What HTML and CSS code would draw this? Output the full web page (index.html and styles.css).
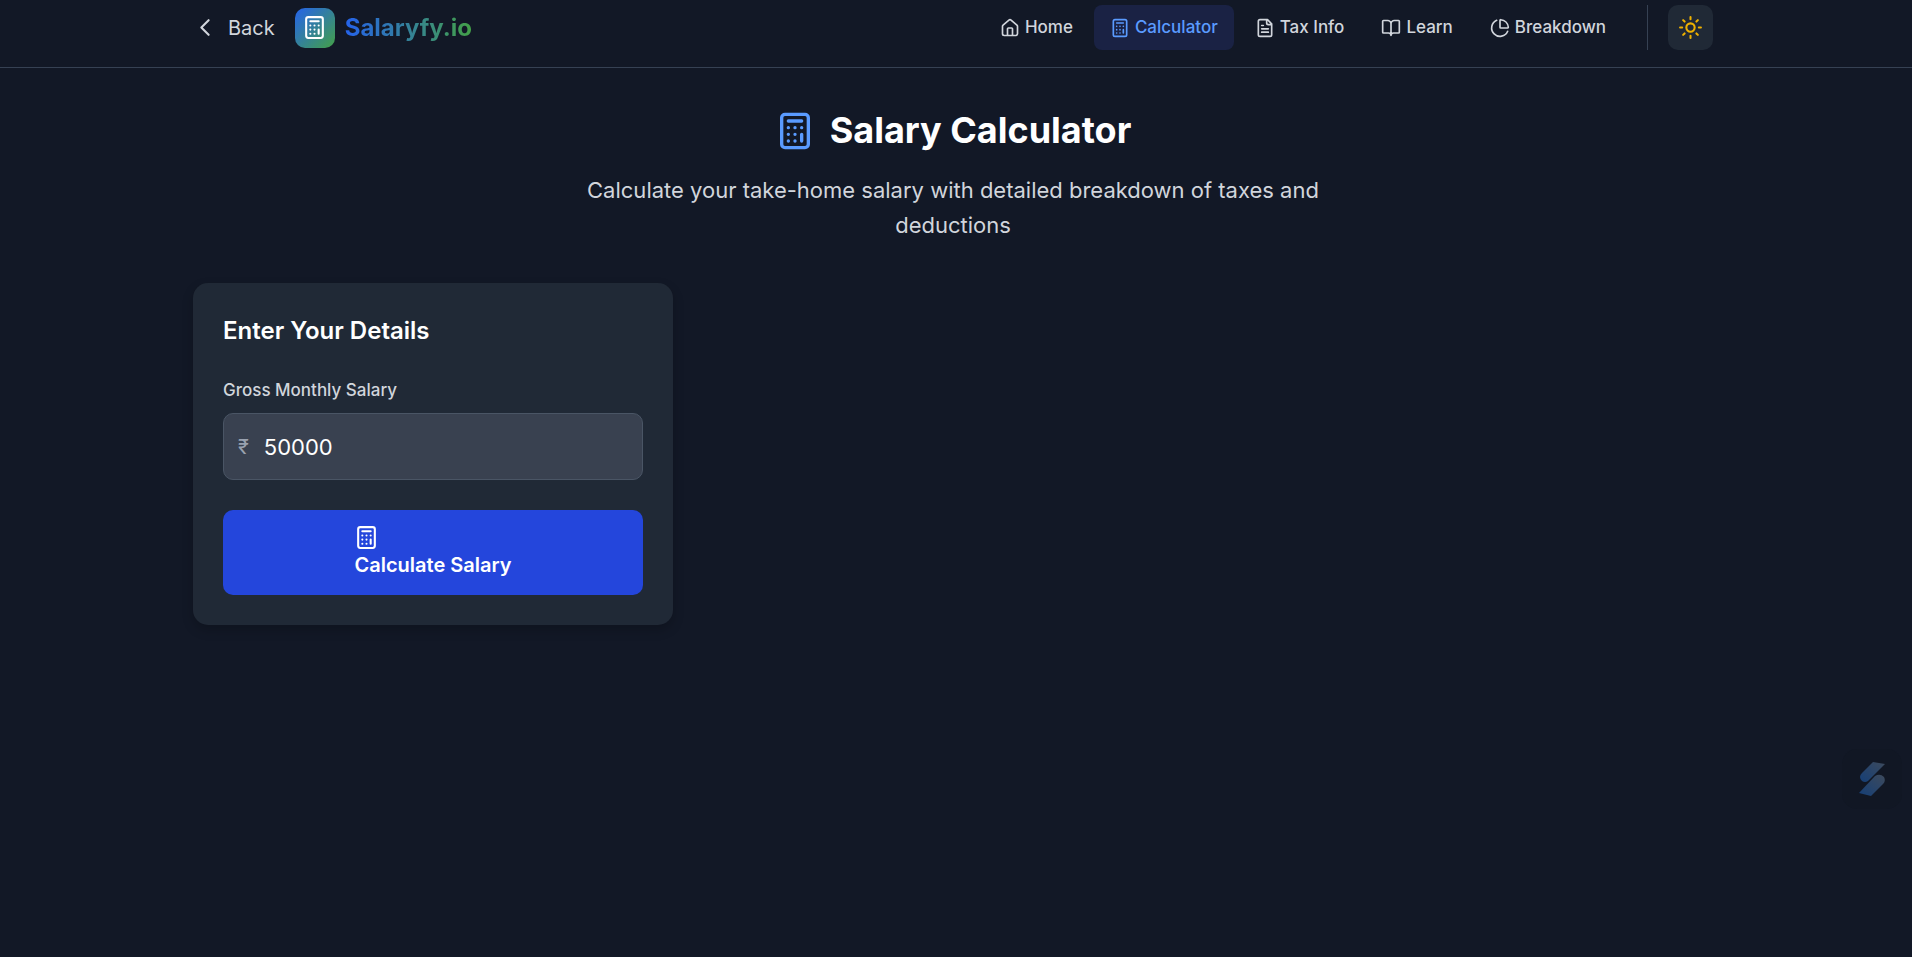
FILE: index.html
```
<!DOCTYPE html>
<html lang="en">
<head>
<meta charset="utf-8">
<title>Salary Calculator - Salaryfy.io</title>
<link rel="stylesheet" href="styles.css">
</head>
<body>
<svg class="sprite" aria-hidden="true">
  <symbol id="calc-box" viewBox="0 0 24 24"><rect x="4" y="2" width="16" height="20" rx="2"/><path d="M8 6h8M16 14v4M16 10h.01M12 10h.01M8 10h.01M12 14h.01M8 14h.01M12 18h.01M8 18h.01"/></symbol>
</svg>
<header class="header">
  <div class="container">
    <div class="bar">
      <div class="brand-group">
        <a class="back" href="#"><svg class="icon-md" viewBox="0 0 24 24"><path d="M15 19l-7-7 7-7"/></svg>Back</a>
        <a class="brand" href="#"><span class="brand-mark"><svg class="icon-md"><use href="#calc-box"/></svg></span><span class="brand-name">Salaryfy.io</span></a>
      </div>
      <nav class="nav">
        <a class="nav-link" href="#"><svg class="icon-sm" viewBox="0 0 24 24"><path d="M3 10a2 2 0 01.7-1.500l7-6a2 2 0 012.600 0l7 6A2 2 0 0121 10v9a2 2 0 01-2 2H5a2 2 0 01-2-2zM9 21v-8a1 1 0 011-1h4a1 1 0 011 1v8"/></svg>Home</a>
        <a class="nav-link active" href="#" aria-current="page"><svg class="icon-sm"><use href="#calc-box"/></svg>Calculator</a>
        <a class="nav-link" href="#"><svg class="icon-sm" viewBox="0 0 24 24"><path d="M15 2H6a2 2 0 00-2 2v16a2 2 0 002 2h12a2 2 0 002-2V7zM14 2v4a2 2 0 002 2h4M10 9H8M16 13H8M16 17H8"/></svg>Tax Info</a>
        <a class="nav-link" href="#"><svg class="icon-sm" viewBox="0 0 24 24"><path d="M12 7v14M3 18a1 1 0 01-1-1V4a1 1 0 011-1h5a4 4 0 014 4 4 4 0 014-4h5a1 1 0 011 1v13a1 1 0 01-1 1h-6a3 3 0 00-3 3 3 3 0 00-3-3z"/></svg>Learn</a>
        <a class="nav-link" href="#"><svg class="icon-sm" viewBox="0 0 24 24"><path d="M21 12c.552 0 1.005-.449.950-.998a10 10 0 00-8.953-8.951c-.550-.055-.998.398-.998.950v8a1 1 0 001 1zM21.210 15.890A10 10 0 118 2.830"/></svg>Breakdown</a>
        <div class="tools"><button class="theme" type="button" aria-label="Switch to light theme"><svg class="icon-md" viewBox="0 0 24 24"><circle cx="12" cy="12" r="4"/><path d="M12 2v2M12 20v2M4.930 4.930l1.410 1.410M17.660 17.660l1.410 1.410M2 12h2M20 12h2M6.340 17.660l-1.410 1.410M19.070 4.930l-1.410 1.410"/></svg></button></div>
      </nav>
    </div>
  </div>
</header>
<main class="container main">
  <div class="intro">
    <h1 class="title"><svg class="icon-xl"><use href="#calc-box"/></svg>Salary Calculator</h1>
    <p class="lead">Calculate your take-home salary with detailed breakdown of taxes and deductions</p>
  </div>
  <div class="grid">
    <form class="card">
      <h2 class="card-title">Enter Your Details</h2>
      <label class="label" for="salary">Gross Monthly Salary</label>
      <div class="field"><span class="currency">₹</span><input class="input" id="salary" type="text" inputmode="numeric" value="50000"></div>
      <button class="submit" type="button"><span class="submit-text"><svg class="icon-md"><use href="#calc-box"/></svg>Calculate Salary</span></button>
    </form>
  </div>
</main>
<button class="assistant" type="button" aria-label="Open assistant">
  <svg class="assistant-mark" viewBox="0 0 28 36"><defs><linearGradient id="ribbon" x1="1" y1="0" x2="0" y2="1"><stop offset="0" stop-color="#3d4a5c"/><stop offset="1" stop-color="#153f77"/></linearGradient></defs><path fill="url(#ribbon)" d="M15 1L27 3 10 20Q7 22 4 20Q0 16 4 12Z"/><path fill="url(#ribbon)" d="M17 15Q22 12 26 16Q28 20 25 23L13 35 1 32Z"/></svg>
</button>
</body>
</html>
```
FILE: styles.css
```
* { box-sizing: border-box; }
body { margin: 0; min-height: 100vh; padding-right: 6px; background: #121826; color: #d1d5dc; font-family: Inter, "Noto Sans", sans-serif; font-size: 20px; line-height: 30px; }
a { color: inherit; text-decoration: none; }
h1, h2, p { margin: 0; }
button { border: 0; padding: 0; font: inherit; cursor: pointer; }
svg { fill: none; stroke: currentColor; stroke-width: 2; stroke-linecap: round; stroke-linejoin: round; flex: none; }
.sprite { display: none; }
.icon-sm { width: 20px; height: 20px; }
.icon-md { width: 25px; height: 25px; }
.icon-xl { width: 40px; height: 40px; color: #5a9bff; }
.container { max-width: 1600px; margin: 0 auto; padding: 0 40px; }
.header { margin-right: -6px; padding-right: 6px; border-bottom: 1px solid #364153; }
.bar { display: flex; align-items: center; justify-content: space-between; padding: 5px 0 17px; }
.brand-group, .back, .brand, .nav, .nav-link { display: flex; align-items: center; }
.brand-group { gap: 20px; }
.back { gap: 10px; }
.brand { gap: 10px; }
.brand-mark { display: grid; place-items: center; width: 40px; height: 40px; border-radius: 10px; color: #fff; background: linear-gradient(135deg, #2563eb, #43a047); }
.brand-name { font-size: 24px; font-weight: 700; line-height: 35px; color: transparent; background: linear-gradient(90deg, #2563eb, #43a047); background-clip: text; }
.nav { gap: 5px; }
.nav-link { gap: 5px; height: 45px; padding: 0 16px; border-radius: 8px; font-size: 17px; font-weight: 500; line-height: 25px; }
.active { color: #5a9bff; background: #1a2244; }
.tools { margin-left: 20px; padding-left: 20px; border-left: 1px solid #364153; }
.theme { display: grid; place-items: center; width: 45px; height: 45px; border-radius: 10px; background: #202936; color: #efb100; }
.main { padding-top: 40px; }
.intro { text-align: center; }
.title { display: flex; align-items: center; justify-content: center; gap: 15px; font-size: 36px; line-height: 45px; font-weight: 700; color: #fff; }
.lead { max-width: 840px; margin: 20px auto 40px; font-size: 22px; line-height: 35px; }
.grid { display: grid; grid-template-columns: repeat(3, 1fr); gap: 40px; }
.card { padding: 30px; border-radius: 15px; background: #202936; box-shadow: 0 5px 12px rgb(0 0 0 / 20%); }
.card-title { margin-bottom: 30px; font-size: 24px; line-height: 35px; font-weight: 600; color: #fff; }
.label { display: block; margin-bottom: 10px; font-size: 17px; line-height: 25px; font-weight: 500; }
.field { display: flex; align-items: center; gap: 15px; height: 67px; padding: 0 14px; border: 1px solid #4a5565; border-radius: 10px; background: #394150; }
.currency { font-size: 20px; color: #99a1af; }
.input { flex: 1; min-width: 0; padding: 0; border: 0; outline: 0; background: transparent; color: #fff; font: inherit; font-size: 22px; }
.submit { display: flex; justify-content: center; width: 100%; margin-top: 30px; padding: 15px; border-radius: 10px; background: #2446dc; color: #fff; font-weight: 600; text-align: left; }
.submit-text .icon-md { display: block; }
.assistant { position: fixed; right: 10px; bottom: 148px; display: grid; place-items: center; width: 60px; height: 60px; border-radius: 15px; background: #111724; }
.assistant-mark { width: 28px; height: 36px; stroke: none; }
```
